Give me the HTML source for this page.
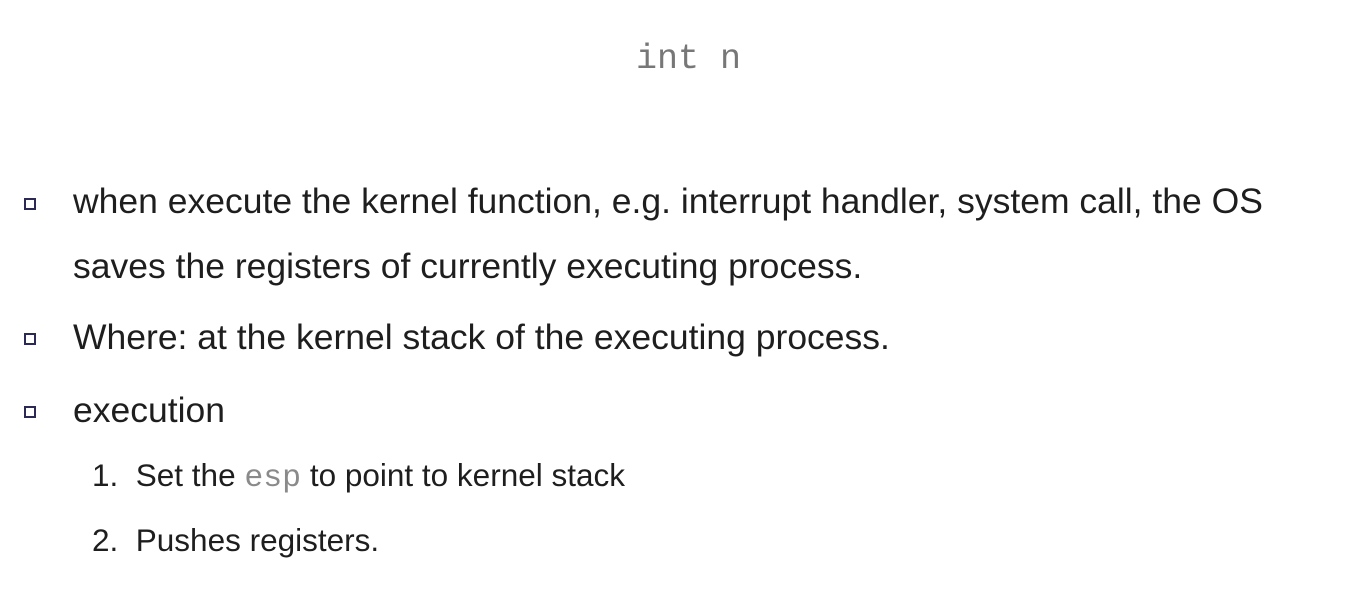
<!DOCTYPE html>
<html><head><style>
html,body{margin:0;padding:0;background:#fff;width:1370px;height:603px;overflow:hidden}
.t{position:absolute;white-space:nowrap;font-family:"Liberation Sans",sans-serif;color:#1e1e1e;line-height:1}
.m{font-family:"Liberation Mono",monospace;color:#8a8a8a}
.b{position:absolute;width:8px;height:8px;border:2px solid #2a2a55;left:24px}
</style></head><body>
<div class="t m" style="left:636px;top:42px;font-size:35px;color:#777">int n</div>

<div class="b" style="top:198px"></div>
<div class="t" style="left:73px;top:184px;font-size:35.5px">when execute the kernel function, e.g. interrupt handler, system call, the OS</div>
<div class="t" style="left:73px;top:249px;font-size:35.5px">saves the registers of currently executing process.</div>

<div class="b" style="top:333px"></div>
<div class="t" style="left:73px;top:320px;font-size:35.5px">Where: at the kernel stack of the executing process.</div>

<div class="b" style="top:406px"></div>
<div class="t" style="left:73px;top:393px;font-size:35.5px">execution</div>

<div class="t" style="left:92px;top:460px;font-size:31.5px">1.&nbsp; Set the <span class="m">esp</span> to point to kernel stack</div>
<div class="t" style="left:92px;top:525px;font-size:31.5px">2.&nbsp; Pushes registers.</div>
</body></html>
